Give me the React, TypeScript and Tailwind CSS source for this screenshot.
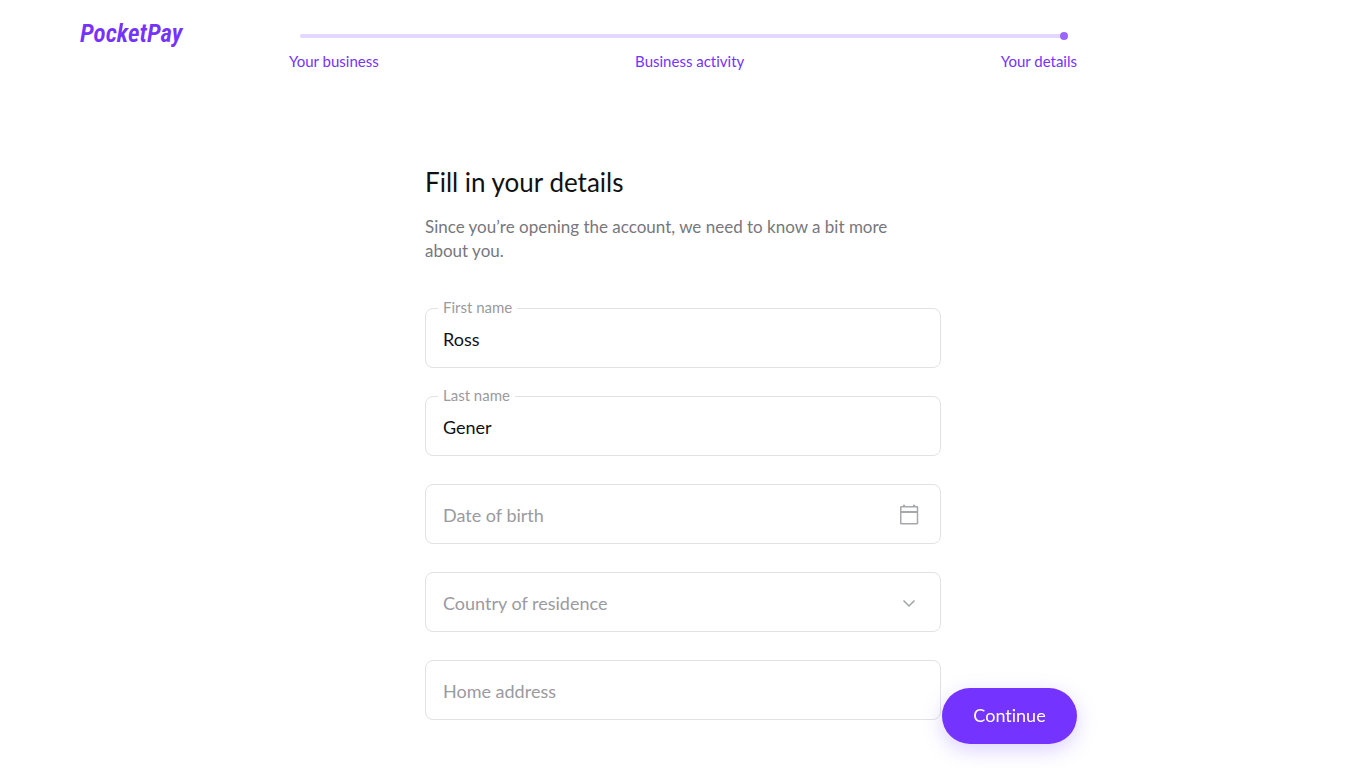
import { useState } from 'react';
import type { ReactNode } from 'react';

const steps = ['Your business', 'Business activity', 'Your details'];

function Field({ id, label, filled, children }: { id: string; label: string; filled: boolean; children: ReactNode }) {
  return (
    <div className="relative flex h-15 items-center rounded-lg border border-[#e2e2e5] bg-white">
      {children}
      <label
        htmlFor={id}
        className={
          filled
            ? 'absolute -top-3 left-3 bg-white px-[5px] text-[15px] leading-5 text-[#9a9aa0]'
            : 'pointer-events-none absolute top-4 left-3 px-[5px] text-lg leading-7 text-[#9a9aa0]'
        }
      >
        {label}
      </label>
    </div>
  );
}

const control =
  'h-full w-full appearance-none rounded-lg bg-transparent px-[17px] pt-0.5 text-lg outline-none focus:ring-1 focus:ring-[#7433ff]';

function CalendarIcon() {
  return (
    <svg className="pointer-events-none absolute right-[19px] size-6" viewBox="0 0 24 24" fill="none" stroke="#a6a8ae" strokeWidth="1.5" aria-hidden="true">
      <rect x="3.75" y="4.75" width="16.75" height="17" rx="0.5" />
      <path d="M3.5 10h17.25" strokeWidth="2" />
      <path d="M7 4.75V2.75M17 4.75V2.75" strokeWidth="2" />
    </svg>
  );
}

function ChevronIcon() {
  return (
    <svg className="pointer-events-none absolute right-[19px] size-6" viewBox="0 0 24 24" fill="none" stroke="#9fa1a7" strokeWidth="1.5" aria-hidden="true">
      <path d="M6.5 10.5l5.5 5.5 5.5-5.5" />
    </svg>
  );
}

export default function App() {
  const [firstName, setFirstName] = useState('Ross');
  const [lastName, setLastName] = useState('Gener');
  const [birthDate, setBirthDate] = useState('');
  const [country, setCountry] = useState('');
  const [address, setAddress] = useState('');

  return (
    <div className="min-h-screen bg-white pb-12 font-[Lato,sans-serif] text-[#111114] [font-variant-ligatures:none]">
      <header className="grid grid-cols-[1fr_minmax(0,788px)_1fr] pt-5">
        <a href="#" className="pl-20 font-['Roboto_Condensed','Roboto',sans-serif] text-[25px] leading-7 font-semibold text-[#7433ff] italic">
          PocketPay
        </a>
        <nav aria-label="Progress" className="pt-3">
          <div className="mr-[9px] ml-[11px] flex h-2 items-center">
            <div className="h-1 flex-1 rounded-l-full bg-[#e3d6ff]" />
            <div className="size-2 rounded-full bg-[#9b66ff]" />
          </div>
          <ol className="mt-[11px] flex justify-between text-[15px] leading-5 text-[#7433ff]">
            {steps.map((step) => (
              <li key={step}>{step}</li>
            ))}
          </ol>
        </nav>
      </header>

      <main className="mx-auto mt-[95px] max-w-[516px]">
        <h1 className="text-[26px] leading-8">Fill in your details</h1>
        <p className="mt-[17px] max-w-[496px] text-[17px] leading-6 text-[#77777c]">
          Since you’re opening the account, we need to know a bit more about you.
        </p>
        <form id="details" className="mt-[45px] flex flex-col gap-7" onSubmit={(e) => e.preventDefault()}>
          <Field id="first-name" label="First name" filled={firstName !== ''}>
            <input id="first-name" className={control} value={firstName} onChange={(e) => setFirstName(e.target.value)} />
          </Field>
          <Field id="last-name" label="Last name" filled={lastName !== ''}>
            <input id="last-name" className={control} value={lastName} onChange={(e) => setLastName(e.target.value)} />
          </Field>
          <Field id="birth-date" label="Date of birth" filled={birthDate !== ''}>
            <input id="birth-date" className={control} value={birthDate} onChange={(e) => setBirthDate(e.target.value)} />
            <CalendarIcon />
          </Field>
          <Field id="country" label="Country of residence" filled={country !== ''}>
            <select id="country" className={control} value={country} onChange={(e) => setCountry(e.target.value)}>
              <option value=""></option>
              <option value="IE">Ireland</option>
              <option value="GB">United Kingdom</option>
            </select>
            <ChevronIcon />
          </Field>
          <Field id="address" label="Home address" filled={address !== ''}>
            <input id="address" className={control} value={address} onChange={(e) => setAddress(e.target.value)} />
          </Field>
        </form>
      </main>

      <div className="pointer-events-none fixed inset-x-0 bottom-6 mx-auto flex max-w-[788px] justify-end">
        <button
          type="submit"
          form="details"
          className="pointer-events-auto h-14 w-[135px] rounded-full bg-[#7433ff] pb-0.5 text-lg text-white shadow-[0_6px_20px_rgba(116,77,255,0.25)]"
        >
          Continue
        </button>
      </div>
    </div>
  );
}
